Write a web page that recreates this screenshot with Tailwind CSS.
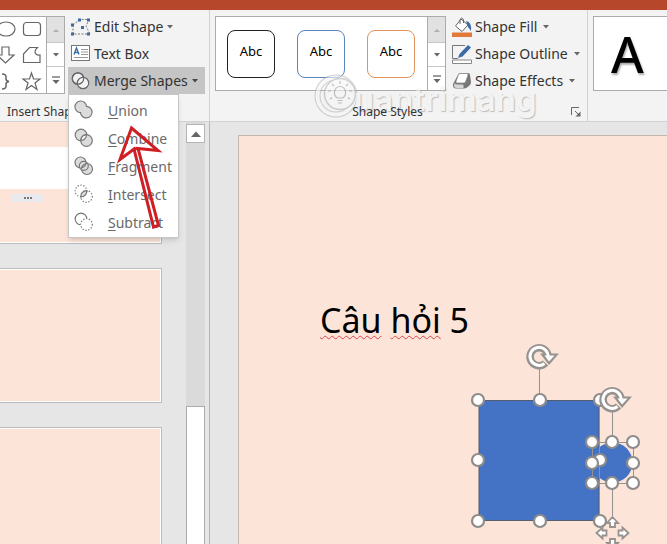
<!DOCTYPE html>
<html lang="vi">
<head>
    <meta charset="UTF-8">
    <meta name="viewport" content="width=device-width, initial-scale=1.0">
    <title>PowerPoint - Merge Shapes</title>
    <script src="https://cdn.jsdelivr.net/npm/@tailwindcss/browser@4"></script>
</head>
<body class="relative flex flex-col h-screen overflow-hidden bg-[#e6e6e6] font-['Noto_Sans',sans-serif] text-[#333]">
    <div class="h-[10px] shrink-0 bg-[#b7472a]"></div>

    <!-- Ribbon -->
    <header class="relative z-10 flex shrink-0 h-28 bg-[#f3f3f3] border-b border-[#d2d2d2]">
        <!-- Insert Shapes -->
        <section class="w-[210px] shrink-0 flex flex-col border-r border-[#d2d2d2]">
            <div class="flex gap-[3px] pt-[3px]">
                <div class="flex mt-[3px] h-[78px] bg-white border border-l-0 border-[#ababab]">
                    <svg class="w-[46px] h-full" viewBox="0 0 46 76" fill="none" stroke="#666" stroke-width="1.2">
                        <ellipse cx="6" cy="12" rx="9" ry="7"/>
                        <rect x="23.500" y="5.500" width="17" height="13" rx="3"/>
                        <path d="M2 30h7v8h5l-8.500 8-8.500-8h5z"/>
                        <path d="M23.500 45.500V37l6-6.500h8c-4 4-3 8 2.500 7.500v7.500z"/>
                        <path d="M2 57q4 0 4 3v2q0 2 3 2.500q-3 .5-3 2.500v2q0 3-4 3" stroke-width="1.500"/>
                        <path d="M31.500 56l2 6h6.500l-5 4 2 6.500-5.500-4-5.500 4 2-6.500-5-4h6.500z"/>
                    </svg>
                    <div class="flex flex-col w-[18px] border-l border-[#ababab]">
                        <button class="h-[26px] flex items-center justify-center bg-[#e1e1e1] border-b border-[#c6c6c6]" aria-label="Previous"><svg class="w-2 h-1" viewBox="0 0 8 4"><path d="M1 4l3-3 3 3z" fill="#b0b0b0"/></svg></button>
                        <button class="h-6 flex items-center justify-center border-b border-[#c6c6c6]" aria-label="Next"><svg class="w-2 h-1" viewBox="0 0 8 4"><path d="M1 0h6L4 3.500z" fill="#666"/></svg></button>
                        <button class="flex-1 flex items-center justify-center" aria-label="More"><svg class="w-[10px] h-2" viewBox="0 0 10 8"><path d="M1 1h8" stroke="#666" stroke-width="1.300"/><path d="M1.500 4h7L5 8z" fill="#666"/></svg></button>
                    </div>
                </div>

                <div class="relative flex flex-col w-[137px] text-[14px]">
                    <button class="h-[27px] flex items-center gap-[3px] pl-[3px]">
                        <svg class="w-5 h-[18px]" viewBox="0 0 20 18"><path d="M2 7v9h16M2 7l7-5.500h9l-3 6.500 4 8" fill="none" stroke="#777" stroke-dasharray="2 1.500"/><path d="M0 5.500h3v3H0zM0 14.500h3v3H0zM7 .5h3v3H7zM16 .5h3v3h-3zM10 8h3v3h-3zM16 14.500h3v3h-3z" fill="#3b6ba5"/></svg>
                        Edit Shape
                        <svg class="ml-px w-[6px] h-1" viewBox="0 0 6 4"><path d="M0 0h6L3 3.500z" fill="#666"/></svg>
                    </button>
                    <button class="h-[27px] flex items-center gap-[3px] pl-[3px]">
                        <svg class="w-5 h-[17px]" viewBox="0 0 20 17"><rect x=".5" y=".5" width="18" height="15" fill="#fff" stroke="#777"/><path d="M3 9.500L5.500 3 8 9.500M4 7.500h3" fill="none" stroke="#3b6ba5" stroke-width="1.400"/><path d="M10 4.500h7M10 7h7M10 9.500h7M3 12.500h14" stroke="#999"/></svg>
                        Text Box
                    </button>
                    <button class="h-[27px] flex items-center gap-[3px] pl-[3px] bg-[#c5c5c5]" aria-expanded="true">
                        <svg class="w-5 h-[18px]" viewBox="0 0 20 18" fill="#f3f3f3" stroke="#666" stroke-width="1.200"><circle cx="7" cy="6.500" r="5.700"/><circle cx="12" cy="11" r="5.700"/><circle cx="7" cy="6.500" r="5.700" fill="none"/></svg>
                        Merge Shapes
                        <svg class="ml-px w-[6px] h-1" viewBox="0 0 6 4"><path d="M0 0h6L3 3.500z" fill="#444"/></svg>
                    </button>

                    <!-- Merge menu -->
                    <div class="absolute left-0 top-[81px] w-[111px] bg-white border border-[#c6c6c6] shadow-md py-px text-[14px] text-[#6a6a6a]" role="menu">
                        <button class="w-full h-7 flex items-center gap-[14px] pl-[5px]" role="menuitem">
                            <svg class="w-5 h-5" viewBox="0 0 20 20" fill="#dcdcdc" stroke="#777" stroke-width="1.200"><path d="M12.500 6.300A5.800 5.800 0 1 0 6.500 12.600A5.800 5.800 0 1 0 12.500 6.300z"/></svg>
                            <span><u class="underline-offset-2">U</u>nion</span>
                        </button>
                        <button class="w-full h-7 flex items-center gap-[14px] pl-[5px]" role="menuitem">
                            <svg class="w-5 h-5" viewBox="0 0 20 20" stroke="#777" stroke-width="1.200"><circle cx="7" cy="7" r="5.800" fill="#dcdcdc"/><circle cx="12.500" cy="12.500" r="5.800" fill="#dcdcdc"/><path d="M12.500 6.700A5.800 5.800 0 0 1 6.800 12.500A5.800 5.800 0 0 1 12.500 6.700z" fill="#fff"/></svg>
                            <span><u class="underline-offset-2">C</u>ombine</span>
                        </button>
                        <button class="w-full h-7 flex items-center gap-[14px] pl-[5px]" role="menuitem">
                            <svg class="w-5 h-5" viewBox="0 0 20 20" fill="#dcdcdc" stroke="#777" stroke-width="1.200"><circle cx="6.500" cy="6.500" r="5.500"/><circle cx="13" cy="13" r="5.500"/><circle cx="9.800" cy="9.800" r="4.500"/><path d="M12 6.500a5.500 5.500 0 0 1-5.500 5.500M7.500 13A5.500 5.500 0 0 1 13 7.500" fill="none"/></svg>
                            <span><u class="underline-offset-2">F</u>ragment</span>
                        </button>
                        <button class="w-full h-7 flex items-center gap-[14px] pl-[5px]" role="menuitem">
                            <svg class="w-5 h-5" viewBox="0 0 20 20" fill="none" stroke="#777" stroke-width="1.200"><g stroke-dasharray="1.300 1.600"><circle cx="7" cy="7" r="5.800"/><circle cx="12.500" cy="12.500" r="5.800"/></g><path d="M12.800 6.700A5.800 5.800 0 0 1 6.800 12.800A5.800 5.800 0 0 1 12.800 6.700z" fill="#dcdcdc"/></svg>
                            <span><u class="underline-offset-2">I</u>ntersect</span>
                        </button>
                        <button class="w-full h-7 flex items-center gap-[14px] pl-[5px]" role="menuitem">
                            <svg class="w-5 h-5" viewBox="0 0 20 20" fill="#fff" stroke="#777" stroke-width="1.200"><circle cx="7" cy="7" r="5.800"/><circle cx="12.500" cy="12.500" r="5.800" stroke="#fff"/><circle cx="12.500" cy="12.500" r="5.800" stroke-dasharray="1.300 1.600"/></svg>
                            <span><u class="underline-offset-2">S</u>ubtract</span>
                        </button>
                    </div>
                </div>
            </div>
            <p class="mt-2 pl-[7px] text-[12px] leading-5">Insert Shapes</p>
        </section>

        <!-- Shape Styles -->
        <section class="relative w-[378px] shrink-0 flex flex-col border-r border-[#d2d2d2]">
            <div class="flex gap-[6px] pl-[5px] pt-[3px]">
                <div class="flex mt-[3px] h-[75px] bg-white border border-[#ababab]">
                    <div class="flex gap-[22px] pl-[11px] pr-[12px] pt-[13px] text-[13px] text-black">
                        <button class="w-12 h-12 rounded-lg border border-[#222] pb-1">Abc</button>
                        <button class="w-12 h-12 rounded-lg border border-[#5b85bb] pb-1">Abc</button>
                        <button class="w-12 h-12 rounded-lg border border-[#e0935a] pb-1">Abc</button>
                    </div>
                    <div class="flex flex-col w-[18px] border-l border-[#ababab]">
                        <button class="h-[26px] flex items-center justify-center bg-[#e1e1e1] border-b border-[#c6c6c6]" aria-label="Previous"><svg class="w-2 h-1" viewBox="0 0 8 4"><path d="M1 4l3-3 3 3z" fill="#b0b0b0"/></svg></button>
                        <button class="h-6 flex items-center justify-center border-b border-[#c6c6c6]" aria-label="Next"><svg class="w-2 h-1" viewBox="0 0 8 4"><path d="M1 0h6L4 3.500z" fill="#666"/></svg></button>
                        <button class="flex-1 flex items-center justify-center" aria-label="More"><svg class="w-[10px] h-2" viewBox="0 0 10 8"><path d="M1 1h8" stroke="#666" stroke-width="1.300"/><path d="M1.500 4h7L5 8z" fill="#666"/></svg></button>
                    </div>
                </div>
                <div class="flex flex-col text-[14px]">
                    <button class="h-[27px] flex items-center gap-[3px]">
                        <svg class="w-5 h-5" viewBox="0 0 20 20"><path d="M9 2l7 6-6 6.500-6.500-5.500z" fill="#fff" stroke="#666"/><path d="M8 7V2.500q1.500-3 3.500 0V6" fill="none" stroke="#666"/><path d="M14 4q6 1 5 10l-3-4z" fill="#3b6ba5"/><path d="M0 15.500h20v4.500H0z" fill="#e07b39"/></svg>
                        Shape Fill
                        <svg class="ml-[3px] w-[6px] h-1" viewBox="0 0 6 4"><path d="M0 0h6L3 3.500z" fill="#666"/></svg>
                    </button>
                    <button class="h-[27px] flex items-center gap-[3px]">
                        <svg class="w-5 h-5" viewBox="0 0 20 20"><path d="M13 1.500H.5v13H6" fill="none" stroke="#777"/><path d="M6 14l1.500-4L16 1l3 2.500-8.500 9z" fill="#3b6ba5"/><path d="M.5 16h19v3.500H.5z" fill="#fff" stroke="#888"/></svg>
                        Shape Outline
                        <svg class="ml-[3px] w-[6px] h-1" viewBox="0 0 6 4"><path d="M0 0h6L3 3.500z" fill="#666"/></svg>
                    </button>
                    <button class="h-[27px] flex items-center gap-[3px]">
                        <svg class="w-5 h-5" viewBox="0 0 20 20"><path d="M7 2h9q2 0 2 2l1 7q0 2-1.500 3.500L15 16.500q-1 1-3 1H4q-3 0-3-3V13z" fill="#777"/><path d="M8 2.500h7q1.500 0 1 1.500l-2.500 7q-.5 1-2 1H5.500q-2 0-1.500-1.500l2.500-7q.5-1 1.500-1z" fill="#fff" stroke="#888" stroke-width=".7"/><path d="M2.500 12q1 1.500 3 1.500h5q1 0 1 1v2.500H4.500q-2.500 0-2.500-2z" fill="#d5d5d5"/></svg>
                        Shape Effects
                        <svg class="ml-[3px] w-[6px] h-1" viewBox="0 0 6 4"><path d="M0 0h6L3 3.500z" fill="#666"/></svg>
                    </button>
                </div>
            </div>

            <!-- Watermark -->
            <div class="absolute left-[104px] top-[64px] flex items-center pointer-events-none opacity-60">
                <svg class="w-[44px] h-[46px]" viewBox="0 0 44 46" fill="none">
                    <circle cx="22" cy="22" r="18.500" stroke="#b0b0b0" stroke-width="6"/>
                    <circle cx="22" cy="22" r="18.500" stroke="#f6f6f6" stroke-width="4"/>
                    <circle cx="26" cy="20" r="15.500" stroke="#b0b0b0" stroke-width="1.500" fill="#f6f6f6"/>
                    <path d="M23.500 24q-3.500-2-3-6a5.500 5.500 0 0 1 11 0q.5 4-3 6zM23.500 26.500h5M24 29h4M26 7v3M18 10l2 2M34 10l-2 2M14 17h3M35 17h3M16 25l2-1.500M36 25l-2-1.500" stroke="#999" stroke-width="1.200"/>
                </svg>
                <span class="-ml-1 pt-1 font-['Inter',sans-serif] text-[33px] leading-10 font-semibold text-[#f3f3f3] text-shadow-[1px_1px_1px_#999]">uantrimang</span>
            </div>

            <div class="relative mt-2 flex items-center pr-[6px]">
                <p class="flex-1 pr-[6px] text-center text-[12px] leading-5">Shape Styles</p>
                <button aria-label="Format Shape"><svg class="w-[10px] h-[10px]" viewBox="0 0 10 10"><path d="M.5 8V.5H8M4 4l4 4" fill="none" stroke="#666"/><path d="M9.500 4.500v5h-5z" fill="#666"/></svg></button>
            </div>
        </section>

        <!-- WordArt Styles -->
        <section class="flex-1 pl-[5px] pt-[6px]">
            <button class="w-full h-[75px] pl-[17px] bg-white border border-r-0 border-[#ababab] text-left font-['Noto_Sans',sans-serif] text-[50px] leading-[72px] font-medium text-black text-shadow-[1px_2px_2px_#aaa]">A</button>
        </section>
    </header>

    <main class="flex-1 min-h-0 flex">
        <!-- Slide thumbnails -->
        <aside class="w-[210px] shrink-0 flex justify-between pr-1 border-r border-[#b5b5b5] overflow-hidden">
            <div class="w-[162px] flex flex-col gap-6">
                <div class="h-[122px] shrink-0 border-r border-b border-[#bcbcbc]">
                    <div class="h-full border-r border-b border-white bg-[#fce4d8] pt-[25px]">
                        <div class="h-[42px] bg-white"></div>
                        <div class="mt-[5px] ml-3 w-8 h-2 bg-[#e9e9ee] flex items-center justify-center"><span class="w-2 border-t-2 border-dotted border-[#777]"></span></div>
                    </div>
                </div>
                <div class="h-[135px] shrink-0 border border-l-0 border-[#bcbcbc]">
                    <div class="h-full border border-l-0 border-white bg-[#fce4d8]"></div>
                </div>
                <div class="h-[135px] shrink-0 border border-l-0 border-[#bcbcbc]">
                    <div class="h-full border border-l-0 border-white bg-[#fce4d8]"></div>
                </div>
            </div>
            <div class="w-[19px] flex flex-col pt-[2px] bg-[#dadada]">
                <button class="h-[19px] shrink-0 flex items-center justify-center bg-white border border-[#b5b5b5]" aria-label="Scroll up"><svg class="w-[10px] h-[6px]" viewBox="0 0 10 6"><path d="M0 6l5-5.500L10 6z" fill="#666"/></svg></button>
                <div class="mt-[263px] flex-1 bg-white border border-b-0 border-[#ababab]"></div>
            </div>
        </aside>

        <!-- Slide -->
        <div class="flex-1 min-w-0 pl-7 pt-[13px]">
            <div class="relative h-full border-l border-t border-[#c5b5ad] bg-[#fce4d8] overflow-hidden">
                <h1 class="absolute left-[81px] top-[160px] whitespace-nowrap font-['Noto_Sans',sans-serif] text-[34px] leading-[48px] text-black"><span class="underline decoration-wavy decoration-[#d9444a] decoration-1 underline-offset-2">Câu</span> <span class="underline decoration-wavy decoration-[#d9444a] decoration-1 underline-offset-2">hỏi</span> 5</h1>
                <svg class="absolute left-0 top-0 w-[428px] h-[408px]" viewBox="239 136 428 408" fill="none">
                    <defs>
                        <circle id="handle" r="6" fill="#fff" stroke="#8e8c8a" stroke-width="2.200"/>
                        <g id="rotate">
                            <path d="M6.500 7A9 9 0 1 1 9 0" stroke="#96928f" stroke-width="7.500"/>
                            <path d="M1-2.500H20L10 9z" fill="#96928f"/>
                            <path d="M5.500 7.500A9 9 0 1 1 9 1" stroke="#fff" stroke-width="3"/>
                            <path d="M5.500-.5h10L10 5.500z" fill="#fff"/>
                        </g>
                        <path id="arm" d="M0-16l5.500 6H2.500v4h-5v-4h-3z" fill="#fff" stroke="#96928f" stroke-width="1.800"/>
                    </defs>
                    <rect x="479" y="400.500" width="120" height="120" fill="#4472c4" stroke="#555f70"/>
                    <circle cx="612.500" cy="462.500" r="20" fill="#4472c4"/>
                    <path d="M539.500 368v32M612.500 410v32M612.500 483v33M599.500 400v121M592.500 442.500h41v41h-41z" stroke="#96928f"/>
                    <use href="#handle" x="478" y="400"/><use href="#handle" x="540" y="400"/><use href="#handle" x="600" y="400"/>
                    <use href="#handle" x="478" y="460"/><use href="#handle" x="600" y="460"/>
                    <use href="#handle" x="478" y="521"/><use href="#handle" x="540" y="521"/><use href="#handle" x="600" y="521"/>
                    <use href="#handle" x="592" y="442"/><use href="#handle" x="612" y="442"/><use href="#handle" x="633" y="442"/>
                    <use href="#handle" x="592" y="463"/><use href="#handle" x="633" y="463"/>
                    <use href="#handle" x="592" y="483"/><use href="#handle" x="612" y="483"/><use href="#handle" x="633" y="483"/>
                    <use href="#rotate" x="539" y="356"/><use href="#rotate" x="612" y="399"/>
                    <g transform="translate(612.500 533)"><use href="#arm"/><use href="#arm" transform="rotate(90)"/><use href="#arm" transform="rotate(180)"/><use href="#arm" transform="rotate(270)"/></g>
                </svg>
            </div>
        </div>
    </main>

    <!-- Red pointer over the menu -->
    <svg class="absolute z-20 left-[110px] top-[115px] w-[60px] h-[120px] pointer-events-none" viewBox="110 115 60 120" fill="none" stroke="#cf1f24" stroke-width="3">
        <path d="M131.500 128L158 150.500l-20-2 20.500 77-5 1.500-19.500-78-14 10.500z"/>
        <path d="M134 149l4-.5"/>
    </svg>
</body>
</html>
